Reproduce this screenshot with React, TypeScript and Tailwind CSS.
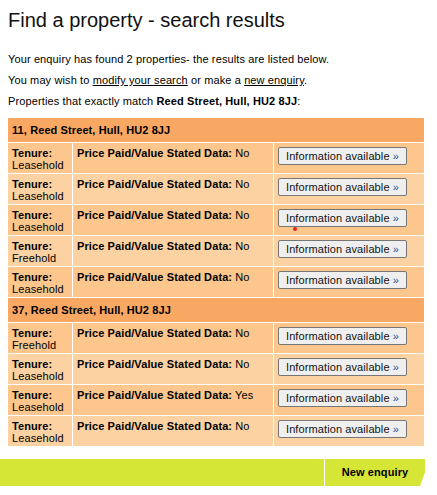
import React from "react";

type Row = { tenure: string; price: string };

const groups: { address: string; rows: Row[] }[] = [
  {
    address: "11, Reed Street, Hull, HU2 8JJ",
    rows: [
      { tenure: "Leasehold", price: "No" },
      { tenure: "Leasehold", price: "No" },
      { tenure: "Leasehold", price: "No" },
      { tenure: "Freehold", price: "No" },
      { tenure: "Leasehold", price: "No" },
    ],
  },
  {
    address: "37, Reed Street, Hull, HU2 8JJ",
    rows: [
      { tenure: "Freehold", price: "No" },
      { tenure: "Leasehold", price: "No" },
      { tenure: "Leasehold", price: "Yes" },
      { tenure: "Leasehold", price: "No" },
    ],
  },
];

function InfoButton() {
  return (
    <button className="h-[18px] w-[129px] rounded-[2px] border border-[#767676] bg-[#efefef] text-[11px] leading-none tracking-[0.1px] text-[#111]">
      Information available <span className="text-[#1a4f9c]">»</span>
    </button>
  );
}

export default function App() {
  return (
    <div className="relative min-h-[495px] bg-white font-['Liberation_Sans',Arial,sans-serif] text-black">
      <div className="px-2 pt-[8px]">
        <h1 className="text-[20px] leading-[24px] text-[#111]">Find a property - search results</h1>
        <div className="mt-[20px] space-y-[7px] text-[11px] leading-[14px] tracking-[0.12px]">
          <p>Your enquiry has found 2 properties- the results are listed below.</p>
          <p>
            You may wish to <span className="underline">modify your search</span> or make a{" "}
            <span className="underline">new enquiry</span>.
          </p>
          <p>
            Properties that exactly match <b>Reed Street, Hull, HU2 8JJ</b>:
          </p>
        </div>

        <div className="mt-[10px] grid w-[416px] grid-cols-[64px_200px_150px] gap-px bg-white text-[11px] leading-[12px] tracking-[0.1px]">
          {groups.map((g) => (
            <React.Fragment key={g.address}>
              <div className="col-span-3 flex h-[24px] items-center bg-[#f8a862] px-1 font-bold">
                {g.address}
              </div>
              {g.rows.map((r, i) => {
                const bg = i % 2 === 0 ? "bg-[#fcc68c]" : "bg-[#fcd2a2]";
                return (
                  <React.Fragment key={i}>
                    <div className={`h-[30px] px-1 pt-[4px] ${bg}`}>
                      <b>Tenure:</b>
                      <br />
                      {r.tenure}
                    </div>
                    <div className={`px-1 pt-[4px] ${bg}`}>
                      <b>Price Paid/Value Stated Data:</b> {r.price}
                    </div>
                    <div className={`px-1 pt-[4px] ${bg}`}>
                      <InfoButton />
                    </div>
                  </React.Fragment>
                );
              })}
            </React.Fragment>
          ))}
        </div>
      </div>

      <div className="mt-[13px] flex h-[27px] w-[425px] bg-[#d6e637] [clip-path:polygon(0_0,100%_0,100%_50%,calc(100%-5px)_100%,0_100%)]">
        <div className="flex-1" />
        <div className="flex w-[101px] items-center justify-center border-l border-white text-[11px] font-bold tracking-[0.1px]">
          New enquiry
        </div>
      </div>

      {/* red pointer dot under the third button */}
      <div className="absolute left-[293px] top-[227px] h-[4px] w-[4px] rounded-full bg-[#e8202a]" />
    </div>
  );
}
